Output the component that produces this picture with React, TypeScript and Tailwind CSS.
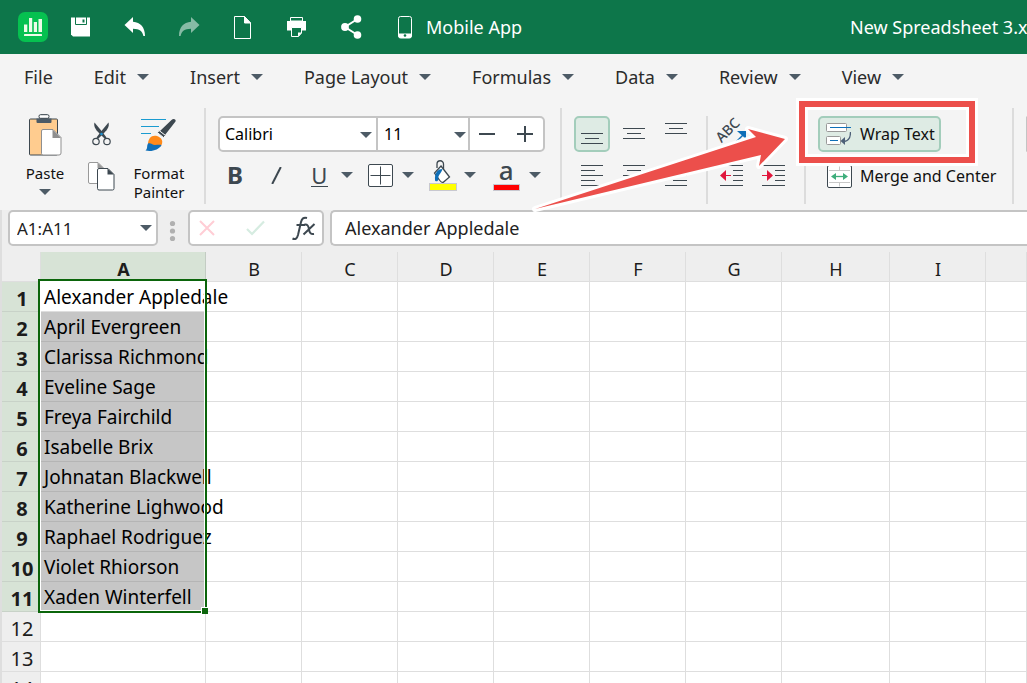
import type { ReactNode } from "react";

const Caret = ({ className = "" }: { className?: string }) => (
  <svg className={className} width="12" height="6" viewBox="0 0 12 6" aria-hidden="true">
    <path d="M0 0h12L6 6z" fill="#4d5b66" />
  </svg>
);

const TopButton = ({ label, children }: { label: string; children: ReactNode }) => (
  <button aria-label={label} className="flex h-full w-[54px] shrink-0 items-center justify-center text-white">
    {children}
  </button>
);

const Logo = () => (
  <svg width="30" height="30" viewBox="0 0 30 30" className="shrink-0" aria-hidden="true">
    <rect width="30" height="30" rx="7" fill="#06c150" />
    <path d="M6 12.500h3.300V20H6zM11 6h3.200v14H11zM15.800 10H19v10h-3.200zM20.500 7H24v13h-3.500z" fill="#effbe8" />
    <rect x="6" y="22" width="18" height="2" rx="0.500" fill="#effbe8" />
  </svg>
);

const UndoShape = ({ className = "" }: { className?: string }) => (
  <svg width="22" height="20" viewBox="0 0 22 20" className={className} aria-hidden="true">
    <path d="M0.500 8 9 0v4.800c7.500 0.700 12 5.500 12 14.200h-1.600C18.300 13.800 15.500 12 9 11.800V16z" fill="#fff" />
  </svg>
);

function TopBar() {
  return (
    <header className="flex h-[54px] shrink-0 items-center overflow-hidden bg-[#0d764a] pl-[18px] text-white">
      <Logo />
      <div className="ml-1.5 flex h-full items-center">
        <TopButton label="Save">
          <svg width="20" height="20" viewBox="0 0 20 20" aria-hidden="true">
            <path d="M0 0.500h19v19h-17l-2-2z" fill="#fff" />
            <path d="M4.500 0v7.500h11V0" fill="none" stroke="#0d764a" strokeWidth="1" />
            <rect x="11.500" y="2.500" width="2" height="3" fill="#0d764a" />
          </svg>
        </TopButton>
        <TopButton label="Undo"><UndoShape /></TopButton>
        <TopButton label="Redo"><UndoShape className="-scale-x-100 opacity-50" /></TopButton>
        <TopButton label="New document">
          <svg width="18" height="23" viewBox="0 0 18 23" fill="none" stroke="#fff" aria-hidden="true">
            <path d="M0.500 0.500H10.500L16.500 7v15.500H0.500z" />
            <path d="M10.500 0.500V7h6z" fill="#fff" />
          </svg>
        </TopButton>
        <TopButton label="Print">
          <svg width="20" height="20" viewBox="0 0 20 20" aria-hidden="true">
            <path d="M3.500 0.500h12V4h-12z" fill="none" stroke="#fff" />
            <path d="M0 4h19v9.500H0z" fill="#fff" />
            <path d="M4.500 10.500h10v5.500l-3 3.500h-7z" fill="#0d764a" stroke="#fff" />
            <path d="M11 15.500h4l-4 4z" fill="#fff" />
          </svg>
        </TopButton>
        <TopButton label="Share">
          <svg width="21" height="24" viewBox="0 0 21 24" aria-hidden="true">
            <path d="M16.500 4 4 12l12.500 8" fill="none" stroke="#fff" strokeWidth="2" />
            <circle cx="16.500" cy="4" r="3.800" fill="#fff" />
            <circle cx="4" cy="12" r="3.900" fill="#fff" />
            <circle cx="16.500" cy="20" r="3.800" fill="#fff" />
          </svg>
        </TopButton>
        <button className="ml-5 flex items-center gap-3.5 text-[18px] whitespace-nowrap">
          <svg width="14" height="23" viewBox="0 0 14 23" aria-hidden="true">
            <rect x="0.500" y="0.500" width="13" height="21.500" rx="2" fill="none" stroke="#fff" />
            <path d="M0.500 17.500h13V20a2 2 0 0 1-2 2h-9a2 2 0 0 1-2-2z" fill="#fff" />
            <circle cx="7" cy="19.500" r="1.300" fill="#0d764a" />
          </svg>
          Mobile App
        </button>
      </div>
      <h1 className="ml-auto w-[177px] shrink-0 text-[18px] whitespace-nowrap">New Spreadsheet 3.xlsx</h1>
    </header>
  );
}

const menus = ["Edit", "Insert", "Page Layout", "Formulas", "Data", "Review", "View"];

function MenuBar() {
  return (
    <nav className="flex h-[46px] shrink-0 items-center gap-[41px] pl-6 text-[18px] text-[#2b2b2b]">
      <button>File</button>
      {menus.map((m) => (
        <button key={m} className="flex items-center gap-[11px] whitespace-nowrap">
          {m}
          <Caret />
        </button>
      ))}
    </nav>
  );
}

const Divider = ({ className }: { className: string }) => <div className={`w-0.5 shrink-0 bg-[#dcdcdc] ${className}`} />;

function ClipboardGroup() {
  return (
    <div className="flex shrink-0 pl-5 text-[15px] leading-[19px] text-[#111]">
      <button className="flex w-[50px] flex-col items-center pt-3.5">
        <svg width="33" height="42" viewBox="0 0 33 42" aria-hidden="true">
          <rect x="0.500" y="5" width="28" height="36" rx="1" fill="#ffcc8f" stroke="#3d4850" />
          <path d="M7.500 4.500h3V2.500a2 2 0 0 1 2-2h5a2 2 0 0 1 2 2v2h3V8a1 1 0 0 1-1 1H8.500a1 1 0 0 1-1-1z" fill="#4d5b66" />
          <rect x="10" y="0.700" width="10" height="3.600" rx="1.500" fill="#fff" stroke="#3d4850" />
          <path d="M14 15.500h10l8 8V39a2 2 0 0 1-2 2H14a1.500 1.500 0 0 1-1.500-1.500V17a1.500 1.500 0 0 1 1.500-1.500z" fill="#fff" stroke="#8f8f8f" />
          <path d="M23.500 15.500v8.500H32z" fill="#8f8f8f" />
        </svg>
        <span className="mt-2">Paste</span>
        <Caret className="mt-1.5" />
      </button>
      <div className="ml-[13px] flex w-9 flex-col items-center gap-4 pt-[22px]">
        <button aria-label="Cut">
          <svg width="19" height="24" viewBox="0 0 19 24" aria-hidden="true">
            <path d="M2.500 0.500C1.500 4 3 7 7 11l6 6 1.500-1.500-4.500-6z" fill="#3d4850" />
            <path d="M16.500 0.500C17.500 4 16 7 12 11l-6 6-1.500-1.500 4.500-6z" fill="#3d4850" />
            <circle cx="9.500" cy="12" r="1.300" fill="#1a8fd0" />
            <circle cx="4" cy="19.500" r="3.200" fill="#f4f4f4" stroke="#3d4850" strokeWidth="1.200" />
            <circle cx="15" cy="19.500" r="3.200" fill="#f4f4f4" stroke="#3d4850" strokeWidth="1.200" />
          </svg>
        </button>
        <button aria-label="Copy">
          <svg width="27" height="29" viewBox="0 0 27 29" aria-hidden="true">
            <path d="M2 0.500h8l6 6V20a1.500 1.500 0 0 1-1.500 1.500H2A1.500 1.500 0 0 1 0.500 20V2A1.500 1.500 0 0 1 2 0.500z" fill="#fff" stroke="#999" />
            <path d="M9.500 0.500V6h6z" fill="#999" />
            <path d="M11 6.500h9l6 6V26.500a1.500 1.500 0 0 1-1.500 1.500H11a1.500 1.500 0 0 1-1.500-1.500V8A1.500 1.500 0 0 1 11 6.500z" fill="#fff" stroke="#3d4850" />
            <path d="M19.500 6.500v6H26z" fill="#3d4850" />
          </svg>
        </button>
      </div>
      <button className="ml-2 flex w-16 flex-col items-center pt-[18px]">
        <svg width="36" height="34" viewBox="0 0 36 34" aria-hidden="true">
          <path d="M0 1.500h25M0 8.500h18M0 15.500h10" stroke="#1a9bd0" />
          <path d="M30.500 2C32.500 0 35.500 1.500 34.500 3.500L24 17l-5-4z" fill="#3d4850" />
          <path d="M18 12.500l6.500 5-2 2-6-4.800z" fill="#3d4850" stroke="#f4f4f4" strokeWidth="1" />
          <path d="M7 26c0-6 4-9.500 9-8 5 1.500 7 6 3.500 10.500z" fill="#ff8a1a" />
          <path d="M4.500 32.500C7 30.500 5.500 28 7 25.500c3-1 4 1.500 7 1.500 2.500 0 4-0.500 6.500 0-2.500 5-10 7-16 5.500z" fill="#0f6fb8" />
        </svg>
        <span className="mt-3">Format<br />Painter</span>
      </button>
    </div>
  );
}

function FontGroup() {
  return (
    <div className="ml-3 w-[327px] shrink-0 pt-4">
      <div className="flex h-9 overflow-hidden rounded-[5px] border-2 border-[#c4c4c4] bg-white text-[16px]">
        <div className="relative w-[156px]">
          <select aria-label="Font" defaultValue="Calibri" className="h-full w-full appearance-none pl-[5px] outline-none">
            <option>Calibri</option>
          </select>
          <Caret className="pointer-events-none absolute top-3.5 right-1" />
        </div>
        <div className="relative w-[94px] border-x-2 border-[#c4c4c4]">
          <select aria-label="Font size" defaultValue="11" className="h-full w-full appearance-none pl-1.5 outline-none">
            <option>11</option>
          </select>
          <Caret className="pointer-events-none absolute top-3.5 right-0.5" />
        </div>
        <button aria-label="Decrease font size" className="flex w-[34px] items-center justify-center">
          <svg width="16" height="16" viewBox="0 0 16 16" aria-hidden="true"><path d="M0 8h16" stroke="#3d4850" strokeWidth="2" /></svg>
        </button>
        <button aria-label="Increase font size" className="flex grow items-center justify-center pl-0.5">
          <svg width="16" height="16" viewBox="0 0 16 16" aria-hidden="true"><path d="M0 8h16M8 0v16" stroke="#3d4850" strokeWidth="2" /></svg>
        </button>
      </div>
      <div className="mt-[5px] flex h-9 items-center text-[#3d4850]">
        <button aria-label="Bold" className="w-[34px] text-[24px] leading-9 font-bold">B</button>
        <button aria-label="Italic" className="flex w-[50px] items-center justify-center">
          <svg width="11" height="17" viewBox="0 0 11 17" aria-hidden="true"><path d="M1.200 17 9.800 0" stroke="#3d4850" strokeWidth="2" /></svg>
        </button>
        <button aria-label="Underline" className="flex w-9 justify-center">
          <span className="w-[17px] border-b border-[#3d4850] text-center text-[22px] leading-[22px]">U</span>
        </button>
        <button aria-label="Underline options" className="flex w-5 justify-center"><Caret /></button>
        <button aria-label="Borders" className="ml-[5px] flex w-[38px] justify-center">
          <svg width="25" height="23" viewBox="0 0 25 23" aria-hidden="true">
            <rect x="0.500" y="0.500" width="24" height="22" rx="1.500" fill="#fff" stroke="#3d4850" />
            <path d="M12.500 2.500v18M2.500 11.500h20" stroke="#3d4850" />
          </svg>
        </button>
        <button aria-label="Border options" className="flex w-4 justify-center"><Caret /></button>
        <button aria-label="Fill color" className="ml-2 flex w-[38px] justify-center">
          <svg width="28" height="31" viewBox="0 0 28 31" aria-hidden="true">
            <path d="M8 8V4a3 3 0 0 1 6.500 0v5" fill="none" stroke="#3d4850" strokeWidth="1.300" />
            <path d="M12 6 20.500 17l-6.500 5.500c-2 0-3.500-2-5-4.500L5.500 13z" fill="#fff" stroke="#3d4850" strokeWidth="1.300" />
            <path d="M13.500 9C9 9 5.500 12 6 20.500c1.500 1.800 3.500 0.500 3.300-2C9 15 12 14 13.500 9z" fill="#0f6fb8" />
            <rect x="0.500" y="23.500" width="27" height="7" fill="#ff0" stroke="#c8c8d0" />
          </svg>
        </button>
        <button aria-label="Fill color options" className="flex w-[18px] justify-center"><Caret /></button>
        <button aria-label="Font color" className="ml-2 flex w-[38px] flex-col items-center">
          <span className="h-[25px] text-[26px] leading-[22px] font-medium">a</span>
          <span className="h-[7px] w-[27px] border border-[#c8c8d0] bg-[#f00]" />
        </button>
        <button aria-label="Font color options" className="flex w-5 justify-center"><Caret /></button>
      </div>
    </div>
  );
}

const Lines = ({ d }: { d: string }) => (
  <svg width="22" height="22" viewBox="0 0 22 22" aria-hidden="true">
    <path d={d} stroke="#3d4850" />
  </svg>
);

const aligns = [
  { label: "Bottom align", d: "M0 10.500h22M4 15.500h14M0 20.500h22", active: true },
  { label: "Middle align", d: "M0 5.500h22M4 10.500h14M0 15.500h22", active: false },
  { label: "Top align", d: "M0 0.500h22M4 5.500h14M0 10.500h22", active: false },
  { label: "Align left", d: "M0 0.500h22M0 5.500h14M0 10.500h22M0 15.500h14M0 20.500h22", active: false },
  { label: "Align center", d: "M0 0.500h22M4 5.500h14M0 10.500h22M4 15.500h14M0 20.500h22", active: false },
  { label: "Align right", d: "M0 0.500h22M8 5.500h14M0 10.500h22M8 15.500h14M0 20.500h22", active: false },
];

function AlignGroup() {
  return (
    <div className="ml-3 grid shrink-0 grid-cols-[36px_36px_36px] gap-1.5 self-start pt-4">
      {aligns.map((a) => (
        <button
          key={a.label}
          aria-label={a.label}
          className={`flex h-9 items-center justify-center rounded-[5px] border-2 ${a.active ? "border-[#a3cdbb] bg-[#deebe4]" : "border-transparent"}`}
        >
          <Lines d={a.d} />
        </button>
      ))}
    </div>
  );
}

const Indent = ({ right }: { right?: boolean }) => (
  <svg width="24" height="22" viewBox="0 0 24 22" aria-hidden="true">
    <path d="M0 0.500h23M13 5.500h10M13 10.500h10M13 15.500h10M0 20.500h23" stroke="#3d4850" />
    <path d={right ? "M0 10.500h6" : "M5 10.500h6"} stroke="#e0163c" />
    <path d={right ? "M5 5 11 10.500l-6 5.500z" : "M6 5 0 10.500 6 16z"} fill="#e0163c" />
  </svg>
);

function OrientationGroup() {
  return (
    <div className="ml-1.5 grid shrink-0 grid-cols-[36px_36px] gap-1.5 self-start pt-4">
      <button aria-label="Orientation" className="relative col-span-2 h-9 w-10">
        <span className="absolute top-1.5 left-0 -rotate-45 text-[14px] leading-4 font-medium text-[#3d4850]">ABC</span>
        <svg className="absolute top-3.5 left-5" width="14" height="14" viewBox="0 0 14 14" aria-hidden="true">
          <path d="M1 13 9 5" stroke="#0f6fb8" strokeWidth="1.500" />
          <path d="M3 1h9v8z" fill="#0f6fb8" />
        </svg>
      </button>
      <button aria-label="Decrease indent" className="flex h-9 items-center justify-center"><Indent /></button>
      <button aria-label="Increase indent" className="flex h-9 items-center justify-center"><Indent right /></button>
    </div>
  );
}

function WrapGroup() {
  return (
    <div className="ml-3 flex w-[194px] shrink-0 flex-col items-start gap-1.5 pt-4 text-[16px] whitespace-nowrap text-[#111]">
      <button className="flex h-9 w-[123px] items-center gap-[9px] rounded-[5px] border-2 border-[#a3cdbb] bg-[#deebe4] pl-1.5">
        <svg width="25" height="22" viewBox="0 0 25 22" className="shrink-0" aria-hidden="true">
          <rect x="0.500" y="0.500" width="20" height="8" rx="1" fill="#fff" stroke="#999" />
          <rect x="0.500" y="13.500" width="14" height="8" rx="1" fill="#fff" stroke="#999" />
          <path d="M4 4.500h21M4 17.500h8" stroke="#0f6fb8" />
          <path d="M24.500 9c0 5-2 9-6 9.500" fill="none" stroke="#4d5f77" strokeWidth="1.300" />
          <path d="M14.500 18 19 14v8z" fill="#4d5f77" />
        </svg>
        Wrap Text
      </button>
      <button className="flex h-9 items-center gap-2 pl-[9px]">
        <svg width="25" height="23" viewBox="0 0 25 23" className="shrink-0" aria-hidden="true">
          <rect x="0.500" y="0.500" width="24" height="22" rx="1.500" fill="#fff" stroke="#3d4850" />
          <path d="M2 5.500h21M2 17.500h21M12.500 1.500v4M12.500 17.500v4" stroke="#c8c8c8" />
          <path d="M6 11.500h13" stroke="#3fae7c" strokeWidth="1.300" />
          <path d="M4 11.500 9 8v7zM21 11.500 16 8v7z" fill="#3fae7c" />
        </svg>
        Merge and Center
      </button>
    </div>
  );
}

function Ribbon() {
  return (
    <section className="flex h-[110px] shrink-0 overflow-hidden">
      <ClipboardGroup />
      <Divider className="ml-[13px] mt-2 h-24" />
      <FontGroup />
      <Divider className="ml-[15px] mt-2 h-24" />
      <AlignGroup />
      <Divider className="ml-3 mt-4 h-[88px]" />
      <OrientationGroup />
      <Divider className="ml-3 mt-4 h-[88px]" />
      <WrapGroup />
      <Divider className="mt-2 h-24" />
      <div className="ml-3 mt-4 h-9 grow rounded-l-[5px] border-2 border-r-0 border-[#c4c4c4] bg-white" />
    </section>
  );
}

function FormulaBar() {
  return (
    <section className="flex h-[42px] shrink-0 items-start bg-[#eee] pl-1.5">
      <div className="relative h-9 w-[150px] shrink-0">
        <input
          aria-label="Name box"
          defaultValue="A1:A11"
          className="h-full w-full rounded-[5px] border-2 border-[#c4c4c4] bg-white pl-[7px] text-[17px] text-[#222] outline-none"
        />
        <Caret className="pointer-events-none absolute top-[15px] right-1.5" />
      </div>
      <svg width="30" height="36" viewBox="0 0 30 36" className="shrink-0" aria-hidden="true">
        <g fill="#b0b0b0">
          <circle cx="14.500" cy="13.500" r="2.600" />
          <circle cx="14.500" cy="21" r="2.600" />
          <circle cx="14.500" cy="28.500" r="2.600" />
        </g>
      </svg>
      <div className="flex h-9 w-[136px] shrink-0 items-center rounded-[5px] border-2 border-[#c4c4c4] bg-white">
        <button aria-label="Cancel" className="ml-[9px]">
          <svg width="16" height="16" viewBox="0 0 16 16" aria-hidden="true"><path d="m1 1 14 14M15 1 1 15" stroke="#ffcdd5" strokeWidth="2" /></svg>
        </button>
        <button aria-label="Enter" className="ml-[31px]">
          <svg width="19" height="16" viewBox="0 0 19 16" aria-hidden="true"><path d="m1 9 5 5L18 1.500" fill="none" stroke="#d6ece1" strokeWidth="2.200" /></svg>
        </button>
        <button aria-label="Insert function" className="ml-[27px]">
          <svg width="24" height="25" viewBox="0 0 24 25" fill="none" stroke="#3d4850" strokeWidth="2" aria-hidden="true">
            <path d="M0.500 22.500c3 1.500 4.500 0 5.500-3.500L9 6c0.800-3.500 2.500-5 6-4M4.500 9h8.500" />
            <path d="M12.500 8.500c3-0.500 4 1.500 4.500 5s2 5 5 4.500M22.500 8 11.500 18.500" />
          </svg>
        </button>
      </div>
      <input
        aria-label="Formula"
        defaultValue="Alexander Appledale"
        className="ml-1.5 h-9 min-w-0 grow rounded-l-[5px] border-2 border-r-0 border-[#c4c4c4] bg-white pl-[13px] text-[18px] text-[#222] outline-none"
      />
    </section>
  );
}

const names = [
  "Alexander Appledale", "April Evergreen", "Clarissa Richmond", "Eveline Sage", "Freya Fairchild", "Isabelle Brix",
  "Johnatan Blackwell", "Katherine Lighwood", "Raphael Rodriguez", "Violet Rhiorson", "Xaden Winterfell",
];
const columns = ["A", "B", "C", "D", "E", "F", "G", "H", "I", ""];
const rows = Array.from({ length: 14 }, (_, i) => i + 1);

function Sheet() {
  return (
    <main className="relative min-h-0 grow overflow-hidden bg-white">
      <table className="w-full table-fixed border-separate border-spacing-0 text-[#1c1c1c]">
        <colgroup>
          <col className="w-[39px]" />
          <col className="w-[165px]" />
          <col className="w-24" />
          <col className="w-24" />
          <col className="w-24" />
          <col className="w-24" />
          <col className="w-24" />
          <col className="w-24" />
          <col className="w-[108px]" />
          <col className="w-24" />
          <col />
        </colgroup>
        <thead>
          <tr className="h-[30px] text-[18px] leading-[24px]">
            <td className="border-r border-b border-[#dedede] bg-[#eee] p-0" />
            {columns.map((c, i) => (
              <th
                key={i}
                scope="col"
                className={`border-r border-b p-0 pt-1 pl-px ${i === 0 ? "border-[#c3ccc3] bg-[#d7e3d6] font-bold" : "border-[#dedede] bg-[#eee] font-normal"}`}
              >
                {c}
              </th>
            ))}
          </tr>
        </thead>
        <tbody>
          {rows.map((r) => (
            <tr key={r} className="h-[30px]">
              <th
                scope="row"
                className={`border-r border-b p-0 pt-1 pl-0.5 text-[20px] leading-[24px] ${r <= 11 ? "border-[#c8d2c8] bg-[#d7e3d6] font-bold" : "border-[#dedede] bg-[#eee] font-normal"}`}
              >
                {r}
              </th>
              {columns.map((_, i) => (
                <td
                  key={i}
                  className={`border-r border-b p-0 ${i === 0 ? "pl-[3px] text-[19px] leading-[26px] whitespace-nowrap text-black" : ""} ${i === 0 && r > 1 && r <= 11 ? "border-[#b5b5b5] bg-[#c6c6c6]" : "border-[#dedede]"}`}
                >
                  {i === 0 ? names[r - 1] : null}
                </td>
              ))}
            </tr>
          ))}
        </tbody>
      </table>
      <div className="pointer-events-none absolute top-[27px] left-9 h-[334px] w-[169px] border-2 border-[#0b650b] ring-1 ring-white ring-inset">
        <div className="absolute -right-[3px] -bottom-[3px] h-[7px] w-[7px] border-t border-l border-white bg-[#0b650b]" />
      </div>
    </main>
  );
}

const arrow = "M535 209 756 137 748 129 785 139 759 166 761 155z";

function Annotation() {
  return (
    <>
      <div className="pointer-events-none absolute top-[98px] left-[796px] h-[68px] w-[182px] border-3 border-white">
        <div className="h-full w-full border-6 border-[#ec4f4b]">
          <div className="h-full w-full border-3 border-white" />
        </div>
      </div>
      <svg className="pointer-events-none absolute top-0 left-0" width="800" height="220" viewBox="0 0 800 220" aria-hidden="true">
        <path d={arrow} fill="#fff" stroke="#fff" strokeWidth="6" strokeLinejoin="round" />
        <path d={arrow} fill="#ec4f4b" />
      </svg>
    </>
  );
}

export default function App() {
  return (
    <div className="relative flex h-screen flex-col overflow-hidden bg-[#f4f4f4] font-['Noto_Sans',sans-serif]">
      <TopBar />
      <MenuBar />
      <Ribbon />
      <div className="flex min-h-0 grow flex-col border-l-2 border-[#dedede]">
        <FormulaBar />
        <Sheet />
      </div>
      <Annotation />
    </div>
  );
}
